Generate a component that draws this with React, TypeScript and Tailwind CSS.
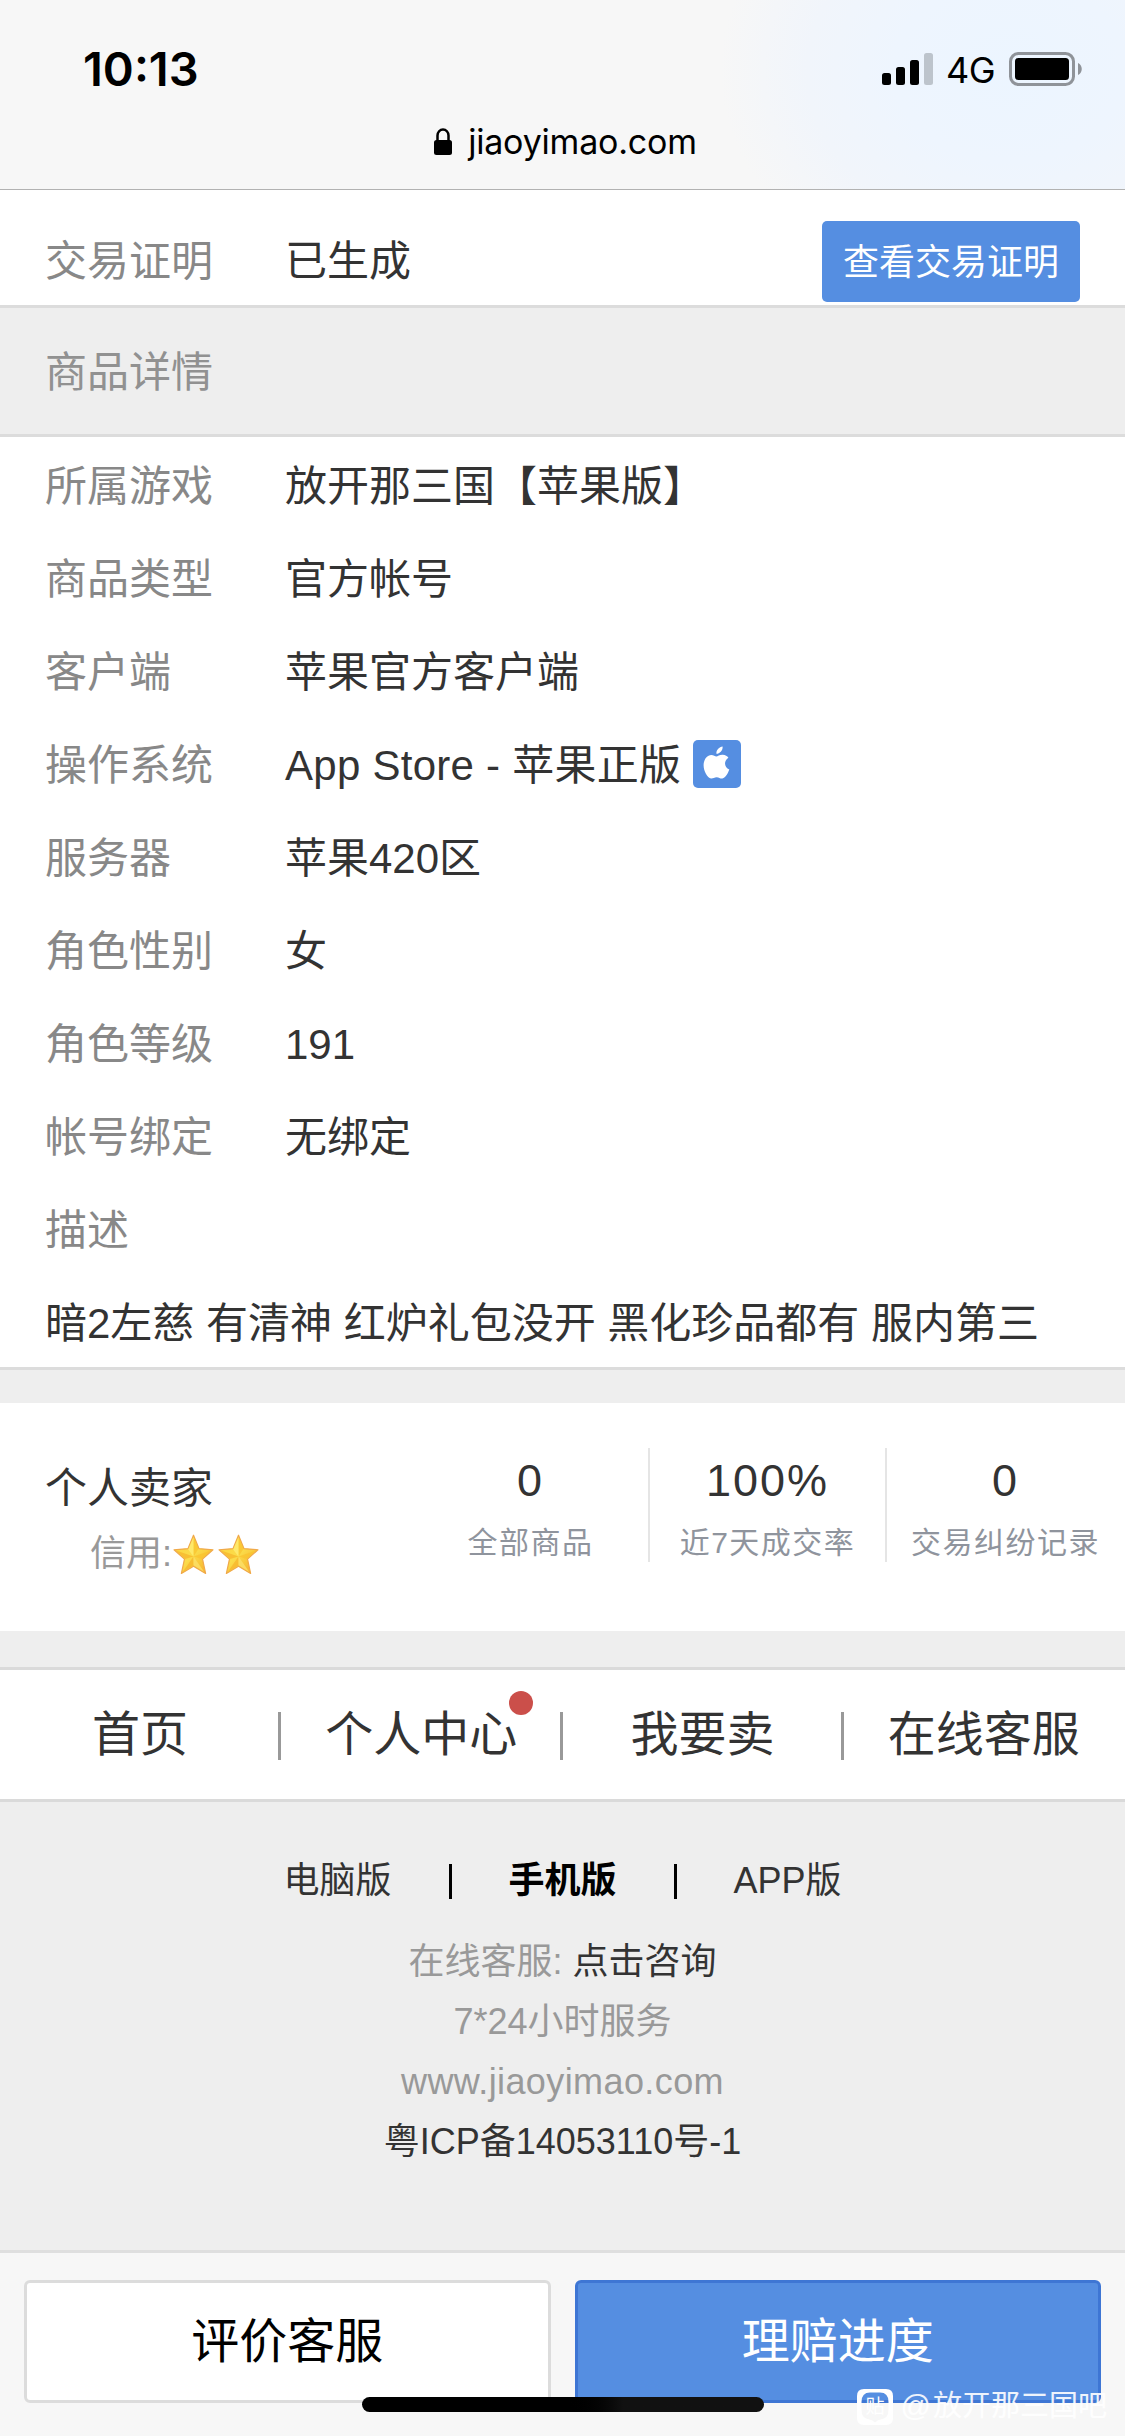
import React from 'react';

interface DetailRow {
  label: string;
  value: string;
  apple?: boolean;
}

const DETAILS: DetailRow[] = [
  { label: '所属游戏', value: '放开那三国【苹果版】' },
  { label: '商品类型', value: '官方帐号' },
  { label: '客户端', value: '苹果官方客户端' },
  { label: '操作系统', value: 'App Store - 苹果正版', apple: true },
  { label: '服务器', value: '苹果420区' },
  { label: '角色性别', value: '女' },
  { label: '角色等级', value: '191' },
  { label: '帐号绑定', value: '无绑定' },
  { label: '描述', value: '' },
];

const STATS = [
  { value: '0', label: '全部商品' },
  { value: '100%', label: '近7天成交率' },
  { value: '0', label: '交易纠纷记录' },
];

const NAV = [
  { label: '首页' },
  { label: '个人中心', dot: true },
  { label: '我要卖' },
  { label: '在线客服' },
];

const AppleBadge = () => (
  <svg viewBox="0 0 48 48" className="relative -top-0.5 ml-3 size-12 shrink-0">
    <rect width="48" height="48" rx="5" fill="#558ee1" />
    <path
      fill="#fff"
      d="M29.6 6.6c.4 3.400-2.600 7.200-6.200 7.200-.4-3.300 2.700-6.800 6.200-7.200zM23.300 16.400c1.400 0 3.500-1.900 6.500-1.700 2.500.1 4.500 1.300 5.600 3-5 3.200-4.200 9.800.9 11.900-1.200 3.300-3.700 8.400-6.900 8.900-2.200.3-3.200-1.300-5.700-1.300s-3.600 1.500-5.700 1.300C14.300 38 10.600 31 10.600 25.300c0-6.200 3.700-10.300 7.700-10.400 2.200 0 3.900 1.500 5 1.500z"
    />
  </svg>
);

const Star = () => (
  <svg viewBox="0 0 40 40" className="h-[41px] w-[41px]">
    <defs>
      <linearGradient id="star" x1="0" y1="0" x2="1" y2="1">
        <stop offset="0" stopColor="#fdd23c" />
        <stop offset="0.5" stopColor="#fbdc4a" />
        <stop offset="1" stopColor="#f5a623" />
      </linearGradient>
    </defs>
    <path
      d="M20 1.200 25.300 14.200 39 15.400 28.800 24.500 31.800 38.500 20 31.400 8.200 38.500 11.200 24.500 1 15.400 14.700 14.200z"
      fill="url(#star)"
      stroke="#f0a94a"
      strokeWidth="1.200"
      strokeLinejoin="round"
    />
    <path d="M20 22 20 3 25 14.500zM20 22 37 16 28 24.300z" fill="#f9c22e" opacity="0.7" />
    <path d="M20 22 3 16 11.800 24.300zM20 22 9.500 37 20 30.500z" fill="#f7b52c" opacity="0.75" />
    <path d="M20 22 20 30.500 30.500 37z" fill="#fbe06a" opacity="0.8" />
    <path d="M20 22 14.800 15 20 3z" fill="#fff07a" opacity="0.7" />
  </svg>
);

const StatusBar = () => (
  <header className="h-[190px] border-b border-[#b2b2b2] bg-[#f7f7f7] bg-[radial-gradient(ellipse_290px_230px_at_1010px_70px,#ecf5ff_0%,#eef5fe_40%,#f1f5fb_70%,#f7f7f7_100%)] font-['Inter','Noto_Sans_CJK_SC',sans-serif] text-black">
    <div className="flex h-[138px] items-center justify-between pr-[43px] pl-[83px]">
      <span className="text-[47px] font-semibold">10:13</span>
      <div className="flex items-center">
        <svg viewBox="0 0 52 34" className="h-[34px] w-[52px]">
          <rect x="0" y="21" width="9" height="12" rx="2.500" />
          <rect x="14" y="15" width="9" height="18" rx="2.500" />
          <rect x="28" y="8" width="9" height="25" rx="2.500" />
          <rect x="42" y="1" width="9" height="32" rx="2.500" fill="#bdc4cc" />
        </svg>
        <span className="relative top-px ml-3 text-[36px] tracking-[-0.5px]">4G</span>
        <svg viewBox="0 0 73 34" className="ml-3.5 h-[34px] w-[73px]">
          <rect x="1.500" y="1.500" width="63" height="31" rx="8" fill="none" stroke="#8f9399" strokeWidth="3" />
          <rect x="6" y="6" width="54" height="22" rx="3.500" />
          <path d="M69 11c5 2 5 10 0 12z" fill="#8f9399" />
        </svg>
      </div>
    </div>
    <div className="flex h-[7px] items-center justify-center pl-[6px]">
      <svg viewBox="0 0 18 27" className="mr-4 h-[27px] w-[18px] shrink-0">
        <path d="M3.500 13V7.500a5.500 6 0 0 1 11 0V13" fill="none" stroke="#000" strokeWidth="2.500" />
        <rect x="0" y="12" width="18" height="15" rx="2.500" />
      </svg>
      <span className="text-[34px] tracking-[-0.2px]">jiaoyimao.com</span>
    </div>
  </header>
);

const Watermark = () => (
  <div className="absolute right-[18px] bottom-[10px] flex items-center text-[29px] leading-[40px] text-white/90">
    <svg viewBox="0 0 36 36" className="relative top-px mr-2 size-9">
      <path
        fillRule="evenodd"
        d="M7 0h22q7 0 7 7v22q0 7-7 7H7q-7 0-7-7V7q0-7 7-7zM13 3.500Q4.500 3.500 4.500 13v8q0 8.500 8 9.500 3 .5 5.500 3 2.500-2.500 5.500-3 8-1 8-9.500v-8q0-9.500-8.500-9.500z"
        fill="#fff"
      />
      <text x="18" y="24" fontSize="19" textAnchor="middle" fill="#fff">贴</text>
    </svg>
    <span className="mr-0.5 text-[30px]">@</span>放开那三国吧
  </div>
);

export default function App() {
  return (
    <div className="relative flex h-[2436px] w-[1125px] flex-col overflow-hidden bg-[#eee] font-['Liberation_Sans','Noto_Sans_CJK_SC',sans-serif] text-[42px] text-[#333]">
      <StatusBar />

      <section className="flex h-[115px] items-start bg-white pr-[45px] pl-[45px]">
        <span className="mt-[25px] w-60 leading-[93px] text-[#888]">交易证明</span>
        <span className="mt-[25px] flex-1 leading-[93px]">已生成</span>
        <button className="mt-[31px] h-[81px] w-[258px] rounded-[5px] bg-[#558ee1] pt-[3px] text-[36px] text-white">
          查看交易证明
        </button>
      </section>

      <h2 className="h-[132px] border-y-[3px] border-[#dcdcdc] pt-0.5 pl-[45px] leading-[126px] text-[#919191]">
        商品详情
      </h2>

      <section className="h-[933px] border-b-[3px] border-[#dcdcdc] bg-white pt-[3px] pl-[45px]">
        {DETAILS.map((row) => (
          <div key={row.label} className="flex h-[93px] items-center leading-[93px]">
            <span className="w-60 text-[#888]">{row.label}</span>
            <span className={row.apple ? 'tracking-[0.26px]' : undefined}>{row.value}</span>
            {row.apple && <AppleBadge />}
          </div>
        ))}
        <p className="leading-[93px] whitespace-nowrap">
          暗2左慈 有清神 红炉礼包没开 黑化珍品都有 服内第三
        </p>
      </section>

      <section className="mt-[33px] flex h-[228px] bg-white pl-[45px]">
        <div className="w-[368px] pt-[61px]">
          <div className="leading-[50px]">个人卖家</div>
          <div className="mt-[15px] flex items-center pl-[45px] text-[36px] leading-[50px] text-[#999]">
            <span>信用:</span>
            <span className="ml-px flex gap-1">
              <Star />
              <Star />
            </span>
          </div>
        </div>
        <div className="mt-[45px] flex h-[114px]">
          {STATS.map((stat) => (
            <div
              key={stat.label}
              className="flex w-[237px] flex-col items-center border-r-2 border-[#e5e5e5] whitespace-nowrap last:border-r-0"
            >
              <span className="mt-1.5 text-[45px] leading-[54px] tracking-[2px]">{stat.value}</span>
              <span className="mt-3 text-[30px] leading-[46px] tracking-[1.5px] text-[#8f949d]">{stat.label}</span>
            </div>
          ))}
        </div>
      </section>

      <nav className="mt-9 grid h-[135px] grid-cols-4 border-y-[3px] border-[#dadada] bg-white text-[48px]">
        {NAV.map((item, i) => (
          <div key={item.label} className="relative flex items-center justify-center pt-px pr-px">
            <span className="relative">
              {item.label}
              {item.dot && <i className="absolute -top-2 -right-4 size-6 rounded-full bg-[#cb4f4a]" />}
            </span>
            {i < 3 && <i className="absolute top-[42px] right-0 h-12 w-[3px] bg-[#999]" />}
          </div>
        ))}
      </nav>

      <footer className="flex h-[448px] flex-col items-center pt-[51px] text-[36px]">
        <div className="grid grid-cols-3 text-center leading-[56px]">
          <a className="w-[225px]">电脑版</a>
          <div className="relative w-[225px] font-bold text-black">
            手机版
            <i className="absolute top-[11px] -left-px h-[35px] w-[3px] bg-black" />
            <i className="absolute top-[11px] -right-0.5 h-[35px] w-[3px] bg-black" />
          </div>
          <a className="w-[225px]">APP版</a>
        </div>
        <div className="mt-[23px] text-center leading-[60px] text-[#999]">
          <p>
            在线客服: <span className="text-[#333]">点击咨询</span>
          </p>
          <p>7*24小时服务</p>
          <p className="tracking-[0.4px]">www.jiaoyimao.com</p>
          <p className="text-[#333]">粤ICP备14053110号-1</p>
        </div>
      </footer>

      <section className="flex h-[186px] items-start gap-6 border-t-[3px] border-[#dfdfdf] bg-[#f7f7f7] px-6 pt-[27px] text-[48px]">
        <button className="h-[123px] flex-1 rounded-md border-[3px] border-[#dcdcdc] bg-white text-black">
          评价客服
        </button>
        <button className="h-[123px] flex-1 rounded-md border-[3px] border-[#3e76d4] bg-[#558ee1] text-white">
          理赔进度
        </button>
      </section>

      <Watermark />
      <div className="absolute bottom-6 left-[362px] h-[15px] w-[402px] rounded-full bg-gradient-to-r from-black from-50% to-[#111] to-65%" />
    </div>
  );
}
